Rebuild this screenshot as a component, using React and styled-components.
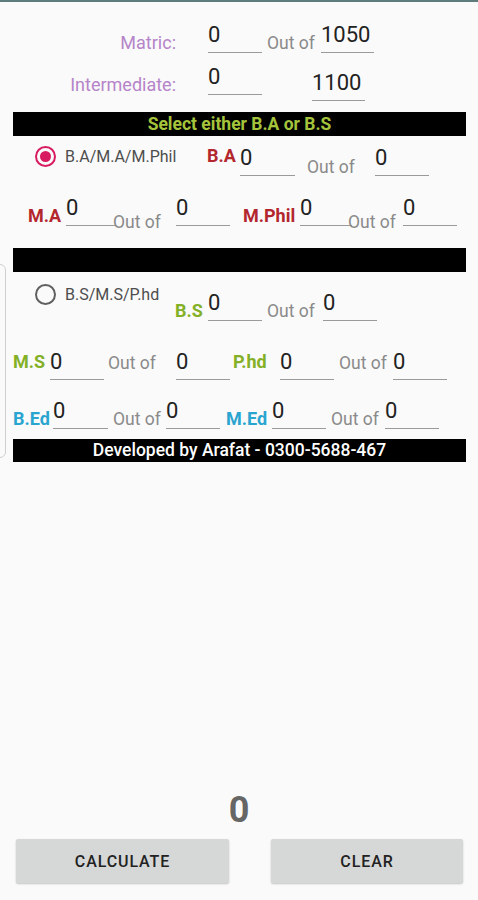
import React from "react";
import styled, { createGlobalStyle } from "styled-components";

const GlobalStyle = createGlobalStyle`
  html, body {
    margin: 0;
    padding: 0;
    background: #fafafa;
    font-family: Roboto, "Noto Sans", "Liberation Sans", sans-serif;
  }
`;

const Page = styled.div`
  position: relative;
  display: flex;
  flex-direction: column;
  min-height: 100vh;
  overflow: hidden;
  background: #fafafa;
`;

const TopBar = styled.div`
  height: 2px;
  background: #5f7c7d;
`;

const Row = styled.div`
  display: flex;
  align-items: flex-end;
  height: ${(p) => p.$h}px;
  flex-shrink: 0;
`;

const Caption = styled.span`
  width: ${(p) => p.$w}px;
  margin-bottom: ${(p) => p.$mb || 0}px;
  text-align: right;
  font-size: 18px;
  line-height: 20px;
  color: #b584c9;
  white-space: nowrap;
`;

const Field = styled.div`
  width: ${(p) => p.$w}px;
  margin-left: ${(p) => p.$ml || 0}px;
  margin-bottom: ${(p) => p.$mb || 0}px;
  padding-bottom: 6px;
  border-bottom: 1px solid #9a9a9a;
  font-size: 22px;
  line-height: 22px;
  color: #222;
  flex-shrink: 0;
`;

const OutOf = styled.span`
  width: ${(p) => p.$w}px;
  margin-left: ${(p) => p.$ml || 0}px;
  margin-bottom: ${(p) => p.$mb || 0}px;
  font-size: 17.5px;
  line-height: 20px;
  color: #8a8a8a;
  white-space: nowrap;
  flex-shrink: 0;
`;

const courseColors = {
  red: "#b3262d",
  green: "#84b026",
  blue: "#2aa5cf",
};

const Course = styled.span`
  width: ${(p) => p.$w}px;
  margin-left: ${(p) => p.$ml || 0}px;
  margin-bottom: ${(p) => p.$mb || 0}px;
  font-size: 18px;
  font-weight: 700;
  line-height: 20px;
  color: ${(p) => courseColors[p.$tone]};
  white-space: nowrap;
  flex-shrink: 0;
`;

const RadioMark = styled.span`
  box-sizing: border-box;
  width: 21px;
  height: 21px;
  margin-left: 35px;
  margin-bottom: ${(p) => p.$mb}px;
  border-radius: 50%;
  border: 2px solid ${(p) => (p.$on ? "#d81b60" : "#5f5f5f")};
  display: flex;
  align-items: center;
  justify-content: center;
  flex-shrink: 0;

  &::after {
    content: "";
    display: ${(p) => (p.$on ? "block" : "none")};
    width: 11px;
    height: 11px;
    border-radius: 50%;
    background: #d81b60;
  }
`;

const RadioText = styled.span`
  width: ${(p) => p.$w}px;
  margin-left: 9px;
  margin-bottom: ${(p) => p.$mb}px;
  font-size: 16px;
  line-height: 20px;
  color: #4d4d4d;
  white-space: nowrap;
  flex-shrink: 0;
`;

const Bar = styled.div`
  height: ${(p) => p.$h}px;
  margin: ${(p) => p.$mt}px 12px 0 13px;
  background: #000;
  color: ${(p) => p.$color || "#fff"};
  font-size: ${(p) => p.$size || 16}px;
  font-weight: ${(p) => p.$weight || 700};
  line-height: ${(p) => p.$h}px;
  text-align: center;
  white-space: nowrap;
  flex-shrink: 0;
`;

const EdgeTab = styled.div`
  position: absolute;
  left: -10px;
  top: 264px;
  width: 14px;
  height: 192px;
  border: 1px solid #cfcfcf;
  border-radius: 6px;
`;

const Spacer = styled.div`
  flex: 1;
`;

const Result = styled.div`
  font-size: 36px;
  font-weight: 700;
  line-height: 40px;
  color: #666;
  text-align: center;
  margin-bottom: 9px;
`;

const Buttons = styled.div`
  display: flex;
  justify-content: space-between;
  padding: 0 15px 17px 16px;
`;

const Button = styled.button`
  width: ${(p) => p.$w}px;
  height: 44px;
  border: none;
  border-radius: 2px;
  background: #d6d7d7;
  box-shadow: 0 1px 2px rgba(0, 0, 0, 0.22);
  font-family: Roboto, "Liberation Sans", sans-serif;
  font-size: 16px;
  font-weight: 500;
  letter-spacing: 0.9px;
  color: #222;
  padding: 0;
`;

export default function App() {
  return (
    <Page>
      <GlobalStyle />
      <TopBar />
      <EdgeTab />

      <Row $h={51}>
        <Caption $w={176}>Matric:</Caption>
        <Field $ml={32} $w={54}>0</Field>
        <OutOf $ml={5} $w={48}>Out of</OutOf>
        <Field $ml={6} $w={53}>1050</Field>
      </Row>

      <Row $h={48}>
        <Caption $w={176} $mb={6}>Intermediate:</Caption>
        <Field $ml={32} $w={54} $mb={6}>0</Field>
        <Field $ml={50} $w={53}>1100</Field>
      </Row>

      <Bar $h={24} $mt={11} $size={17.5} $color="#a5c43c">Select either B.A or B.S</Bar>

      <Row $h={40}>
        <RadioMark $on $mb={9} />
        <RadioText $w={127} $mb={9}>B.A/M.A/M.Phil</RadioText>
        <Course $tone="red" $ml={15} $w={29} $mb={10}>B.A</Course>
        <Field $ml={4} $w={55}>0</Field>
        <OutOf $ml={12} $w={49} $mb={-1}>Out of</OutOf>
        <Field $ml={19} $w={54}>0</Field>
      </Row>

      <Row $h={50}>
        <Course $tone="red" $ml={28} $w={33}>M.A</Course>
        <Field $ml={5} $w={49}>0</Field>
        <OutOf $ml={-2} $w={49} $mb={-6}>Out of</OutOf>
        <Field $ml={14} $w={54}>0</Field>
        <Course $tone="red" $ml={13} $w={52}>M.Phil</Course>
        <Field $ml={5} $w={52}>0</Field>
        <OutOf $ml={-4} $w={49} $mb={-6}>Out of</OutOf>
        <Field $ml={6} $w={54}>0</Field>
      </Row>

      <Bar $h={24} $mt={22} />

      <Row $h={49}>
        <RadioMark $mb={16} />
        <RadioText $w={107} $mb={16}>B.S/M.S/P.hd</RadioText>
        <Course $tone="green" $ml={3} $w={27}>B.S</Course>
        <Field $ml={6} $w={54}>0</Field>
        <OutOf $ml={5} $w={48}>Out of</OutOf>
        <Field $ml={8} $w={54}>0</Field>
      </Row>

      <Row $h={59}>
        <Course $tone="green" $ml={13} $w={32} $mb={8}>M.S</Course>
        <Field $ml={5} $w={54}>0</Field>
        <OutOf $ml={4} $w={49} $mb={7}>Out of</OutOf>
        <Field $ml={19} $w={54}>0</Field>
        <Course $tone="green" $ml={3} $w={34} $mb={8}>P.hd</Course>
        <Field $ml={13} $w={54}>0</Field>
        <OutOf $ml={5} $w={48} $mb={7}>Out of</OutOf>
        <Field $ml={6} $w={54}>0</Field>
      </Row>

      <Row $h={49}>
        <Course $tone="blue" $ml={13} $w={35}>B.Ed</Course>
        <Field $ml={5} $w={55}>0</Field>
        <OutOf $ml={5} $w={49}>Out of</OutOf>
        <Field $ml={4} $w={54}>0</Field>
        <Course $tone="blue" $ml={6} $w={41}>M.Ed</Course>
        <Field $ml={5} $w={54}>0</Field>
        <OutOf $ml={5} $w={48}>Out of</OutOf>
        <Field $ml={6} $w={54}>0</Field>
      </Row>

      <Bar $h={23} $mt={10} $size={17.5} $weight={500}>
        Developed by Arafat - 0300-5688-467
      </Bar>

      <Spacer />

      <Result>0</Result>
      <Buttons>
        <Button $w={213}>CALCULATE</Button>
        <Button $w={192}>CLEAR</Button>
      </Buttons>
    </Page>
  );
}
